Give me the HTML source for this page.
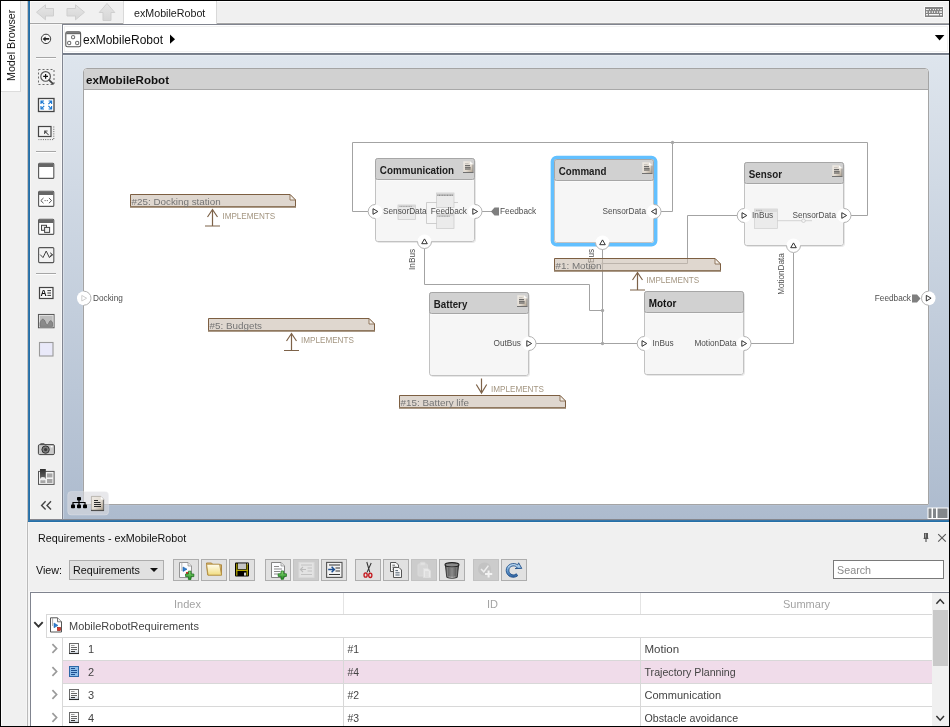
<!DOCTYPE html>
<html><head><meta charset="utf-8"><title>exMobileRobot</title>
<style>
*{box-sizing:border-box;margin:0;padding:0}
html,body{width:950px;height:727px;overflow:hidden;background:#f0f0f0;font-family:"Liberation Sans",sans-serif;}
#root{position:relative;width:950px;height:727px;overflow:hidden;background:#f0f0f0}
#root>*{will-change:transform}
.abs{position:absolute}
svg text{font-family:"Liberation Sans",sans-serif}
.bt{font-size:10.4px;font-weight:bold}
.pl{font-size:8.25px;fill:#4e4e4e}
.nt{font-size:9.85px;fill:#757575}
.im{font-size:8.15px;fill:#a39580}
.pb{fill:none;stroke:#b2b2b2;stroke-width:1}
.ui{font-size:10.7px;color:#1a1a1a;white-space:nowrap;line-height:1}
.btn{position:absolute;top:559px;width:26px;height:22px;background:#e1e1e1;border:1px solid #adadad}
.btn.dis{background:#cccccc;border-color:#c2c2c2}
.cell{position:absolute;font-size:11px;color:#444;white-space:nowrap;line-height:1}
.hl{position:absolute;height:1px;background:#d8d8d8}
.vl{position:absolute;width:1px;background:#d8d8d8}
</style></head><body><div id="root">

<!-- outer black borders -->
<div class="abs" style="left:0;top:0;width:950px;height:1px;background:#000"></div>
<div class="abs" style="left:0;top:0;width:1px;height:727px;background:#000"></div>
<div class="abs" style="left:949px;top:0;width:1px;height:727px;background:#000"></div>
<div class="abs" style="left:0;top:726px;width:950px;height:1px;background:#000"></div>
<div class="abs" style="left:1px;top:1px;width:1px;height:725px;background:#fafafa"></div>

<!-- Model Browser tab -->
<div class="abs" style="left:1px;top:1px;width:20px;height:91px;background:#fff;border-right:1px solid #dcdcdc;border-bottom:1px solid #dcdcdc"></div>
<div class="abs ui" style="left:0;top:0;width:0;height:0"><div style="position:absolute;left:5.6px;top:80.6px;transform-origin:0 0;transform:rotate(-90deg);font-size:10.7px;color:#111;">Model Browser</div></div>

<!-- blue frame lines -->
<div class="abs" style="left:26px;top:1px;width:1px;height:520px;background:#f4f4f4"></div>
<div class="abs" style="left:27px;top:1px;width:1px;height:521px;background:#c5c2c0"></div>
<div class="abs" style="left:28px;top:1px;width:1px;height:521px;background:#3677aa"></div>
<div class="abs" style="left:29px;top:1px;width:1px;height:521px;background:#256fa7"></div>
<div class="abs" style="left:30px;top:2px;width:1px;height:518px;background:#f9f6f3"></div>
<div class="abs" style="left:28px;top:520px;width:921px;height:1px;background:#3677aa"></div>
<div class="abs" style="left:28px;top:521px;width:921px;height:1px;background:#256fa7"></div>
<div class="abs" style="left:30px;top:522px;width:919px;height:1px;background:#f8f6f3"></div>
<div class="abs" style="left:30px;top:519px;width:919px;height:1px;background:#85868d"></div>
<div class="abs" style="left:26px;top:521px;width:1px;height:205px;background:#f5f5f5"></div>
<div class="abs" style="left:27px;top:521px;width:1px;height:205px;background:#bababa"></div>
<div class="abs" style="left:28px;top:522px;width:1px;height:204px;background:#f5f5f5"></div>
<div class="abs" style="left:29px;top:591px;width:1px;height:135px;background:#f8f8f8"></div>
<div class="abs" style="left:29px;top:591px;width:920px;height:1px;background:#f8f8f8"></div>

<!-- top tab strip -->
<div class="abs" style="left:30px;top:1px;width:919px;height:1px;background:#fdfdfd"></div>
<div class="abs" style="left:30px;top:22px;width:919px;height:1px;background:#f5f5f5"></div>
<div class="abs" style="left:30px;top:23px;width:919px;height:1px;background:#a6a6a6"></div>
<div class="abs" style="left:62px;top:24px;width:887px;height:1px;background:#80848f"></div>
<div class="abs" style="left:31px;top:24px;width:31px;height:1px;background:#f8f8f8"></div>
<div class="abs" style="left:123px;top:1px;width:94px;height:23px;background:#fff;border-left:1px solid #d9d9d9;border-right:1px solid #d9d9d9"></div>
<div class="abs ui" style="left:134px;top:8px;font-size:10.7px;">exMobileRobot</div>
<svg class="abs" style="left:30px;top:0px" width="100" height="24" viewBox="0 0 100 24">
<defs><linearGradient id="ag" x1="0" y1="0" x2="0" y2="1"><stop offset="0" stop-color="#e6e6e6"/><stop offset="1" stop-color="#d6d6d6"/></linearGradient></defs>
<path d="M6.5 12.2 L15.5 4.8 V8.5 H23.5 V16 H15.5 V19.8 Z" fill="url(#ag)" stroke="#cfcfcf" stroke-width="1" stroke-linejoin="round"/>
<path d="M54.5 12.2 L45.5 4.8 V8.5 H37 V16 H45.5 V19.8 Z" fill="url(#ag)" stroke="#cfcfcf" stroke-width="1" stroke-linejoin="round"/>
<path d="M77 3.5 L84.8 12.5 H81 V20.5 H73 V12.5 H69.2 Z" fill="url(#ag)" stroke="#cfcfcf" stroke-width="1" stroke-linejoin="round"/>
</svg><svg class="abs" style="left:924px;top:6px" width="20" height="12" viewBox="0 0 20 12"><rect x="0" y="0" width="20" height="12" rx="1" fill="#fafafa"/><rect x="1" y="1" width="18" height="10" fill="#848484"/><rect x="2" y="3" width="2.8" height="1.1" fill="#f4f4f4"/><rect x="6" y="3" width="1" height="1.1" fill="#f4f4f4"/><rect x="8.8" y="3" width="1.2" height="1.1" fill="#f4f4f4"/><rect x="11" y="3" width="1" height="1.1" fill="#f4f4f4"/><rect x="13.6" y="3" width="1.2" height="1.1" fill="#f4f4f4"/><rect x="16" y="3" width="2" height="1.1" fill="#f4f4f4"/><rect x="2" y="5.2" width="1.5" height="1.8" fill="#e6e6e6"/><rect x="5" y="5.2" width="1.3" height="1.8" fill="#e6e6e6"/><rect x="7.8" y="5.2" width="1.1" height="1.8" fill="#e6e6e6"/><rect x="10" y="5.2" width="1.2" height="1.8" fill="#e6e6e6"/><rect x="12.8" y="5.2" width="1.1" height="1.8" fill="#e6e6e6"/><rect x="15.2" y="5.2" width="2.8" height="1.8" fill="#e6e6e6"/><rect x="2" y="8" width="2" height="1.4" fill="#f4f4f4"/><rect x="5" y="8" width="10" height="1.4" fill="#f8f8f8"/><rect x="16" y="8" width="2" height="1.4" fill="#f4f4f4"/></svg>

<!-- address bar -->
<div class="abs" style="left:63px;top:25px;width:886px;height:28px;background:#fff"></div>
<div class="abs" style="left:64px;top:26px;width:884px;height:26px;border:1px solid #f1f1f1"></div>
<div class="abs" style="left:61px;top:24px;width:1px;height:495px;background:#f8f8f8"></div>
<div class="abs" style="left:62px;top:24px;width:1px;height:496px;background:#828691"></div>
<div class="abs" style="left:63px;top:53px;width:886px;height:1px;background:#757c89"></div>
<div class="abs" style="left:63px;top:54px;width:886px;height:1px;background:#7b828f"></div>
<div class="abs ui" style="left:83px;top:33.5px;font-size:12px;color:#111">exMobileRobot</div>
<svg class="abs" style="left:39px;top:32px" width="14" height="14" viewBox="0 0 14 14"><circle cx="7" cy="6.9" r="4.7" fill="#f6f6f6" stroke="#3c3c3c" stroke-width="1"/><path d="M3.6 6.9 L6.6 4.4 V6 H10.2 V7.8 H6.6 V9.4 Z" fill="#222"/></svg><svg class="abs" style="left:65px;top:31px" width="17" height="17" viewBox="0 0 17 17"><rect x="0.8" y="0.8" width="14.8" height="15" rx="1.6" fill="#fff" stroke="#555" stroke-width="1.1"/><rect x="1.2" y="1.2" width="14" height="2" fill="#6a6a6a"/><rect x="6.6" y="4.7" width="3" height="3" rx=".6" fill="none" stroke="#555" stroke-width=".9"/><rect x="2.7" y="10.4" width="3" height="3.2" rx=".6" fill="none" stroke="#555" stroke-width=".9"/><rect x="10.7" y="10.4" width="3" height="3.2" rx=".6" fill="none" stroke="#555" stroke-width=".9"/></svg><svg class="abs" style="left:169px;top:34px" width="8" height="11" viewBox="0 0 8 11"><path d="M1 0.6 L6 5.2 L1 9.8 Z" fill="#000"/></svg><svg class="abs" style="left:934px;top:34px" width="12" height="8" viewBox="0 0 12 8"><path d="M0.8 1 H10.4 L5.6 6.4 Z" fill="#000"/></svg>

<!-- canvas -->
<div class="abs" style="left:63px;top:55px;width:886px;height:464px;background:linear-gradient(#dee5ed,#adbbce)"></div>
<div class="abs" style="left:63px;top:55px;width:1px;height:464px;background:rgba(255,255,255,.3)"></div>
<div class="abs" style="left:63px;top:55px;width:886px;height:1px;background:rgba(255,255,255,.3)"></div>
<!-- frame -->
<div class="abs" style="left:83px;top:68px;width:846px;height:437px;background:#fff;border:1px solid #a4a4a4;border-radius:4px 4px 1px 1px;box-shadow:0 0 1px rgba(255,255,255,.7)"></div>
<div class="abs" style="left:84px;top:69px;width:844px;height:20px;background:#d1d1d1;border-radius:3px 3px 0 0"></div>
<div class="abs" style="left:84px;top:89px;width:844px;height:1px;background:#a8a8a8"></div>


<svg class="abs" style="left:0;top:0" width="950" height="727" viewBox="0 0 950 727">
<defs>
<linearGradient id="dg" x1="0" y1="0" x2="1" y2="1"><stop offset="0" stop-color="#efebe5"/><stop offset=".55" stop-color="#e2dbd2"/><stop offset="1" stop-color="#a89a86"/></linearGradient>
<g id="docic"><path d="M0.3 0.3 H7 L10.3 3.3 V11.6 H0.3 Z" fill="url(#dg)"/><path d="M7 0.3 L10.3 3.3 H7 Z" fill="#fbfaf8"/><path d="M10 3.6 V11.6" stroke="#8b8b8b" stroke-width=".9"/><path d="M0 11.5 H10.4" stroke="#707070" stroke-width="1"/><path d="M2 2.7 H5.6" stroke="#bdb8b2" stroke-width=".9"/><path d="M2 4.7 H7" stroke="#555" stroke-width="1.1"/><path d="M2 6.9 H7.6" stroke="#444" stroke-width="1.2"/><path d="M2 8.5 H7.6" stroke="#8a8680" stroke-width=".9"/></g>
</defs>
<text x="86" y="84" font-size="10.4" font-weight="bold" fill="#111" textLength="83" lengthAdjust="spacingAndGlyphs">exMobileRobot</text>
<path d="M368 211.5 H352.5 V142.5 H867.5 V215.5 H851" fill="none" stroke="#a3a3a3" stroke-width="1"/>
<path d="M661 211.5 H672.5 V142.5" fill="none" stroke="#a3a3a3" stroke-width="1"/>
<path d="M481 211.5 H492" fill="none" stroke="#a3a3a3" stroke-width="1"/>
<path d="M424.5 248 V284.5 H589.5 V310.5 H602.5" fill="none" stroke="#a3a3a3" stroke-width="1"/>
<path d="M602.5 249 V343.5" fill="none" stroke="#a3a3a3" stroke-width="1"/>
<path d="M536 343.5 H638" fill="none" stroke="#a3a3a3" stroke-width="1"/>
<path d="M751 343.5 H793.5 V253" fill="none" stroke="#a3a3a3" stroke-width="1"/>
<path d="M738 215.5 H687.5 V263.5 H602.5" fill="none" stroke="#a3a3a3" stroke-width="1"/>
<circle cx="672.5" cy="142.5" r="1.65" fill="#a6a6a6"/>
<circle cx="602.5" cy="310.5" r="1.65" fill="#a6a6a6"/>
<circle cx="602.5" cy="343.5" r="1.65" fill="#a6a6a6"/>
<circle cx="602.5" cy="263.5" r="1.1" fill="#aaa"/>
<text class="pl" transform="translate(415,270) rotate(-90)">InBus</text>
<text class="pl" transform="translate(594,270) rotate(-90)">InBus</text>
<text class="pl" transform="translate(784,294.8) rotate(-90)" textLength="41.6" lengthAdjust="spacingAndGlyphs">MotionData</text>
<rect x="376.5" y="159.5" width="99" height="83" rx="2.6" fill="none" stroke="#e7e7e7"/><rect x="375.5" y="158.5" width="99" height="83" rx="2.2" fill="#f6f6f6" stroke="#c2c2c2"/><line x1="376.5" y1="180.5" x2="473.5" y2="180.5" stroke="#fafafa"/><path d="M375.5 177.5 V160.7 a2.2 2.2 0 0 1 2.2 -2.2 H472.3 a2.2 2.2 0 0 1 2.2 2.2 V177.5 a2 2 0 0 1 -2 2 H377.5 a2 2 0 0 1 -2 -2 Z" fill="#d1d1d1" stroke="#a6a6a6"/><text x="379.8" y="174" class="bt" fill="#1c1c1c" textLength="74.3" lengthAdjust="spacingAndGlyphs">Communication</text><use href="#docic" x="463" y="161"/>
<g stroke="#c9c9c9" fill="#ebebeb" stroke-width="0.7"><rect x="398" y="205" width="17.5" height="14.5"/><rect x="436.5" y="193" width="17.5" height="14.5"/><rect x="436.5" y="214" width="17.5" height="14.5"/><path d="M436.5 202.5 H426.5 V223.5 H436.5 M454 202.5 H458" fill="none" stroke="#bdbdbd"/><rect x="398" y="205" width="17.5" height="2.2" fill="#d8d8d8" stroke="none"/><rect x="436.5" y="193" width="17.5" height="2.2" fill="#d8d8d8" stroke="none"/><rect x="436.5" y="214" width="17.5" height="2.2" fill="#d8d8d8" stroke="none"/><path d="M399.5 206.4 H412" stroke="#8a8a8a" stroke-width=".7" stroke-dasharray="1.1 .5" fill="none"/><path d="M437.3 195.2 H453.4" stroke="#4a4a4a" stroke-width=".8" stroke-dasharray="1.2 .4" fill="none"/><path d="M437.3 216.2 H450" stroke="#7a7a7a" stroke-width=".7" stroke-dasharray="1.2 .4" fill="none"/></g>
<rect x="552.4" y="157.4" width="103.3" height="87.3" rx="4.2" fill="none" stroke="#62c0ff" stroke-width="3.5"/><rect x="554.5" y="159.5" width="99" height="83" rx="2.2" fill="#f6f6f6" stroke="#c2c2c2"/><line x1="555.5" y1="181.5" x2="652.5" y2="181.5" stroke="#fafafa"/><path d="M554.5 178.5 V161.7 a2.2 2.2 0 0 1 2.2 -2.2 H651.3 a2.2 2.2 0 0 1 2.2 2.2 V178.5 a2 2 0 0 1 -2 2 H556.5 a2 2 0 0 1 -2 -2 Z" fill="#d1d1d1" stroke="#a6a6a6"/><text x="558.8" y="175" class="bt" fill="#1c1c1c" textLength="47.6" lengthAdjust="spacingAndGlyphs">Command</text><use href="#docic" x="642" y="162"/>
<rect x="745.5" y="163.5" width="99" height="83" rx="2.6" fill="none" stroke="#e7e7e7"/><rect x="744.5" y="162.5" width="99" height="83" rx="2.2" fill="#f6f6f6" stroke="#c2c2c2"/><line x1="745.5" y1="184.5" x2="842.5" y2="184.5" stroke="#fafafa"/><path d="M744.5 181.5 V164.7 a2.2 2.2 0 0 1 2.2 -2.2 H841.3 a2.2 2.2 0 0 1 2.2 2.2 V181.5 a2 2 0 0 1 -2 2 H746.5 a2 2 0 0 1 -2 -2 Z" fill="#d1d1d1" stroke="#a6a6a6"/><text x="748.8" y="178" class="bt" fill="#1c1c1c" textLength="33.3" lengthAdjust="spacingAndGlyphs">Sensor</text><use href="#docic" x="832" y="165"/>
<g stroke="#cfcfcf" fill="#ebebeb" stroke-width="0.7"><rect x="754.5" y="209" width="23" height="19.5"/><rect x="754.5" y="209" width="23" height="3" fill="#dcdcdc" stroke="none"/><path d="M777.5 220.7 H812" fill="none" stroke="#c4c4c4"/><circle cx="803.5" cy="220.7" r="1.8" fill="#f4f4f4" stroke="#c4c4c4"/><path d="M756 210.4 H762" stroke="#999" stroke-width=".7" stroke-dasharray="1.1 .5" fill="none"/></g>
<rect x="430.5" y="293.5" width="99" height="83" rx="2.6" fill="none" stroke="#e7e7e7"/><rect x="429.5" y="292.5" width="99" height="83" rx="2.2" fill="#f6f6f6" stroke="#c2c2c2"/><line x1="430.5" y1="314.5" x2="527.5" y2="314.5" stroke="#fafafa"/><path d="M429.5 311.5 V294.7 a2.2 2.2 0 0 1 2.2 -2.2 H526.3 a2.2 2.2 0 0 1 2.2 2.2 V311.5 a2 2 0 0 1 -2 2 H431.5 a2 2 0 0 1 -2 -2 Z" fill="#d1d1d1" stroke="#a6a6a6"/><text x="433.8" y="308" class="bt" fill="#1c1c1c" textLength="33.5" lengthAdjust="spacingAndGlyphs">Battery</text><use href="#docic" x="517" y="295"/>
<rect x="645.5" y="292.5" width="99" height="83" rx="2.6" fill="none" stroke="#e7e7e7"/><rect x="644.5" y="291.5" width="99" height="83" rx="2.2" fill="#f6f6f6" stroke="#c2c2c2"/><line x1="645.5" y1="313.5" x2="742.5" y2="313.5" stroke="#fafafa"/><path d="M644.5 310.5 V293.7 a2.2 2.2 0 0 1 2.2 -2.2 H741.3 a2.2 2.2 0 0 1 2.2 2.2 V310.5 a2 2 0 0 1 -2 2 H646.5 a2 2 0 0 1 -2 -2 Z" fill="#d1d1d1" stroke="#a6a6a6"/><text x="648.8" y="307" class="bt" fill="#111" textLength="27.5" lengthAdjust="spacingAndGlyphs">Motor</text>
<circle cx="375.2" cy="211.5" r="7" fill="#fff"/><path d="M375.2 204.5 A7 7 0 0 0 375.2 218.5" class="pb"/><path d="M373.0 208.7 L377.8 211.5 L373.0 214.3 Z" fill="none" stroke="#333" stroke-width="1"/>
<circle cx="475" cy="211.5" r="7" fill="#fff"/><path d="M475 204.5 A7 7 0 0 1 475 218.5" class="pb"/><path d="M472.8 208.7 L477.6 211.5 L472.8 214.3 Z" fill="none" stroke="#333" stroke-width="1"/>
<circle cx="424.5" cy="241.5" r="7" fill="#fff"/><path d="M417.5 241.5 A7 7 0 0 0 431.5 241.5" class="pb"/><path d="M421.7 243.7 L424.5 238.9 L427.3 243.7 Z" fill="none" stroke="#333" stroke-width="1"/>
<circle cx="654" cy="211.5" r="7" fill="#fff"/><path d="M654 204.5 A7 7 0 0 1 654 218.5" class="pb"/><path d="M656.2 208.7 L651.4 211.5 L656.2 214.3 Z" fill="none" stroke="#333" stroke-width="1"/>
<circle cx="602.5" cy="242.5" r="7" fill="#fff"/><path d="M595.5 242.5 A7 7 0 0 0 609.5 242.5" class="pb"/><path d="M599.7 244.7 L602.5 239.9 L605.3 244.7 Z" fill="none" stroke="#333" stroke-width="1"/>
<circle cx="744.2" cy="215.5" r="7" fill="#fff"/><path d="M744.2 208.5 A7 7 0 0 0 744.2 222.5" class="pb"/><path d="M742.0 212.7 L746.8000000000001 215.5 L742.0 218.3 Z" fill="none" stroke="#333" stroke-width="1"/>
<circle cx="844" cy="215.5" r="7" fill="#fff"/><path d="M844 208.5 A7 7 0 0 1 844 222.5" class="pb"/><path d="M841.8 212.7 L846.6 215.5 L841.8 218.3 Z" fill="none" stroke="#333" stroke-width="1"/>
<circle cx="793.5" cy="245.5" r="7" fill="#fff"/><path d="M786.5 245.5 A7 7 0 0 0 800.5 245.5" class="pb"/><path d="M790.7 247.7 L793.5 242.9 L796.3 247.7 Z" fill="none" stroke="#333" stroke-width="1"/>
<circle cx="529" cy="343.5" r="7" fill="#fff"/><path d="M529 336.5 A7 7 0 0 1 529 350.5" class="pb"/><path d="M526.8 340.7 L531.6 343.5 L526.8 346.3 Z" fill="none" stroke="#333" stroke-width="1"/>
<circle cx="644.2" cy="343.5" r="7" fill="#fff"/><path d="M644.2 336.5 A7 7 0 0 0 644.2 350.5" class="pb"/><path d="M642.0 340.7 L646.8000000000001 343.5 L642.0 346.3 Z" fill="none" stroke="#333" stroke-width="1"/>
<circle cx="744" cy="343.5" r="7" fill="#fff"/><path d="M744 336.5 A7 7 0 0 1 744 350.5" class="pb"/><path d="M741.8 340.7 L746.6 343.5 L741.8 346.3 Z" fill="none" stroke="#333" stroke-width="1"/>
<circle cx="84" cy="298.2" r="7" fill="#fff"/><path d="M84 291.2 A7 7 0 0 1 84 305.2" class="pb"/><path d="M81.8 295.4 L86.6 298.2 L81.8 301.0 Z" fill="none" stroke="#cfcfcf" stroke-width="1"/>
<circle cx="928.5" cy="298.2" r="7" fill="#fff"/><path d="M928.5 291.2 A7 7 0 0 0 928.5 305.2" class="pb"/><path d="M926.3 295.4 L931.1 298.2 L926.3 301.0 Z" fill="none" stroke="#333" stroke-width="1"/>
<text x="383" y="214.4" class="pl" text-anchor="start">SensorData</text>
<text x="467" y="214.4" class="pl" text-anchor="end">Feedback</text>
<text x="646" y="214.4" class="pl" text-anchor="end">SensorData</text>
<text x="752" y="218.4" class="pl" text-anchor="start">InBus</text>
<text x="836" y="218.4" class="pl" text-anchor="end">SensorData</text>
<text x="521" y="346.4" class="pl" text-anchor="end">OutBus</text>
<text x="652.5" y="346.4" class="pl" text-anchor="start">InBus</text>
<text x="736.6" y="346.4" class="pl" text-anchor="end">MotionData</text>
<text x="93" y="301.3" class="pl" text-anchor="start">Docking</text>
<text x="911" y="301.3" class="pl" text-anchor="end">Feedback</text>
<text x="500" y="214.4" class="pl" text-anchor="start">Feedback</text>
<path d="M499 207.5 V215.5 H494.5 L491 211.5 L494.5 207.5 Z" fill="#7f7f7f"/>
<path d="M912 294.5 V302.5 H917 L920.5 298.5 L917 294.5 Z" fill="#7f7f7f"/>
<path d="M130.5 194.5 H290.0 L295.5 200.0 V206.5 H130.5 Z" fill="rgba(203,190,178,0.62)" stroke="#7d5f42" stroke-width="1"/><path d="M290.0 194.5 V200.0 H295.5 Z" fill="#f3efea" stroke="#7d5f42" stroke-width="0.8" stroke-linejoin="round"/><line x1="130.0" y1="206.95" x2="296.0" y2="206.95" stroke="#8f785f" stroke-width="1.8"/><text x="131.5" y="204.5" class="nt">#25: Docking station</text>
<path d="M212.5 226 V209.5 M207.5 217.0 L212.5 209.5 L217.5 217.0 M205.0 226 H220.0" fill="none" stroke="#7d6248" stroke-width="1.2"/><text x="222.4" y="219" class="im">IMPLEMENTS</text>
<path d="M208.5 318.5 H369.0 L374.5 324.0 V330.5 H208.5 Z" fill="rgba(203,190,178,0.62)" stroke="#7d5f42" stroke-width="1"/><path d="M369.0 318.5 V324.0 H374.5 Z" fill="#f3efea" stroke="#7d5f42" stroke-width="0.8" stroke-linejoin="round"/><line x1="208.0" y1="330.95" x2="375.0" y2="330.95" stroke="#8f785f" stroke-width="1.8"/><text x="209.5" y="328.5" class="nt">#5: Budgets</text>
<path d="M291.5 350.5 V333.5 M286.5 341.0 L291.5 333.5 L296.5 341.0 M284.0 350.5 H299.0" fill="none" stroke="#7d6248" stroke-width="1.2"/><text x="301" y="343" class="im">IMPLEMENTS</text>
<path d="M554.5 258.5 H715.0 L720.5 264.0 V270.5 H554.5 Z" fill="rgba(203,190,178,0.62)" stroke="#7d5f42" stroke-width="1"/><path d="M715.0 258.5 V264.0 H720.5 Z" fill="#f3efea" stroke="#7d5f42" stroke-width="0.8" stroke-linejoin="round"/><line x1="554.0" y1="270.95" x2="721.0" y2="270.95" stroke="#8f785f" stroke-width="1.8"/><text x="555.5" y="268.5" class="nt">#1: Motion</text>
<path d="M637.5 290 V272.5 M632.5 280.0 L637.5 272.5 L642.5 280.0 M630.0 290 H645.0" fill="none" stroke="#7d6248" stroke-width="1.2"/><text x="646.4" y="283" class="im">IMPLEMENTS</text>
<path d="M481.5 378.5 V393 M476.3 384.5 L481.5 393 L486.7 384.5" fill="none" stroke="#7d6248" stroke-width="1.2"/><text x="491" y="392" class="im">IMPLEMENTS</text>
<path d="M399.5 395.5 H560.0 L565.5 401.0 V407.5 H399.5 Z" fill="rgba(203,190,178,0.62)" stroke="#7d5f42" stroke-width="1"/><path d="M560.0 395.5 V401.0 H565.5 Z" fill="#f3efea" stroke="#7d5f42" stroke-width="0.8" stroke-linejoin="round"/><line x1="399.0" y1="407.95" x2="566.0" y2="407.95" stroke="#8f785f" stroke-width="1.8"/><text x="400.5" y="405.5" class="nt">#15: Battery life</text>
<rect x="67.7" y="491.4" width="41" height="23.6" rx="3.6" fill="rgba(217,218,222,.61)" stroke="rgba(255,255,255,.22)" stroke-width="1"/><g fill="#000"><rect x="77" y="497" width="4" height="3.6" rx=".8"/><rect x="71" y="504.4" width="4" height="3.8" rx=".8"/><rect x="77" y="504.4" width="4" height="3.8" rx=".8"/><rect x="83" y="504.4" width="4" height="3.8" rx=".8"/><path d="M79 500 V505 M73 505 V502.5 H85 V505" fill="none" stroke="#000" stroke-width="1.2"/></g><path d="M91.4 496.4 H100.8 L103.8 499.4 V510.8 H91.4 Z" fill="url(#dg)" stroke="#9a958c" stroke-width=".6"/><path d="M100.8 496.4 L103.8 499.4 H100.8 Z" fill="#fdfdfc"/><path d="M103.4 499.8 V510.8" stroke="#6a6a6a" stroke-width="1"/><path d="M91 510.4 H104" stroke="#4a4a4a" stroke-width="1.1"/><path d="M94 500.5 H98 M94 502.5 H100.4 M94 504.5 H101 M94 506.5 H101" stroke="#2a2a2a" stroke-width="1"/><rect x="927.5" y="507.5" width="21" height="11.5" fill="#fff"/><rect x="928.5" y="508.5" width="3" height="9.5" fill="#83878b"/><rect x="933" y="508.5" width="3" height="9.5" fill="#83878b"/><rect x="937.5" y="508.5" width="10" height="9.5" fill="#83878b"/>
</svg>

<div class="abs" style="left:36px;top:57px;width:20px;height:1px;background:#a6a6a6"></div><div class="abs" style="left:36px;top:58px;width:20px;height:1px;background:#fdfdfd"></div><div class="abs" style="left:36px;top:151px;width:20px;height:1px;background:#a6a6a6"></div><div class="abs" style="left:36px;top:152px;width:20px;height:1px;background:#fdfdfd"></div><div class="abs" style="left:36px;top:273px;width:20px;height:1px;background:#a6a6a6"></div><div class="abs" style="left:36px;top:274px;width:20px;height:1px;background:#fdfdfd"></div><svg class="abs" style="left:37px;top:68px" width="19" height="19" viewBox="0 0 19 19"><rect x="1.5" y="1.5" width="15.5" height="15" fill="none" stroke="#6c6c6c" stroke-width="1" stroke-dasharray="2 2"/><circle cx="8.6" cy="8.4" r="4.8" fill="#f6f6f6" stroke="#555" stroke-width="1.15"/><path d="M6.2 8.4 H11 M8.6 6 V10.8" stroke="#111" stroke-width="1.2"/><path d="M12.2 12.1 L16 15.9" stroke="#444" stroke-width="1.7" stroke-linecap="round"/></svg><svg class="abs" style="left:37px;top:97px" width="19" height="16" viewBox="0 0 19 16"><rect x="1.5" y="1.5" width="15.5" height="13" fill="#fff" stroke="#444" stroke-width="1.3"/><g stroke="#1b78d2" stroke-width="1.15" fill="none"><path d="M4 7 V4 H7 M4.2 4.2 L7.2 7.2"/><path d="M11.6 4 H14.6 V7 M14.4 4.2 L11.4 7.2"/><path d="M4 9 V12 H7 M4.2 11.8 L7.2 8.8"/><path d="M11.6 12 H14.6 V9 M14.4 11.8 L11.4 8.8"/></g></svg><svg class="abs" style="left:37px;top:125px" width="19" height="17" viewBox="0 0 19 17"><rect x="1.5" y="1.5" width="12.5" height="10" fill="#f4f4f4" stroke="#444" stroke-width="1.2"/><path d="M16.8 1.5 V14.6 H1.5" fill="none" stroke="#666" stroke-width="1" stroke-dasharray="1 1.3"/><path d="M11.6 10 L7.8 6.2 M7.6 9 V6 H10.6" fill="none" stroke="#555" stroke-width="1.05"/></svg><svg class="abs" style="left:37px;top:162px" width="19" height="18" viewBox="0 0 19 18"><rect x="1.6" y="1.2" width="15.2" height="15.2" rx="1" fill="#fff" stroke="#555" stroke-width="1.1"/><rect x="2" y="1.6" width="14.4" height="3.4" fill="#666"/></svg><svg class="abs" style="left:37px;top:190px" width="19" height="18" viewBox="0 0 19 18"><rect x="1.6" y="1.2" width="15.2" height="15.2" rx="1" fill="#fff" stroke="#555" stroke-width="1.1"/><rect x="2" y="1.6" width="14.4" height="3.4" fill="#666"/><path d="M6.5 8 L3.8 10.6 L6.5 13.2 M11.9 8 L14.6 10.6 L11.9 13.2" fill="none" stroke="#555" stroke-width="1"/><path d="M7.6 10.6 H8.6 M9.8 10.6 H10.8" stroke="#555" stroke-width="1"/></svg><svg class="abs" style="left:37px;top:218px" width="19" height="18" viewBox="0 0 19 18"><rect x="1.6" y="1.2" width="15.2" height="15.2" rx="1" fill="#fff" stroke="#555" stroke-width="1.1"/><rect x="2" y="1.6" width="14.4" height="3.4" fill="#666"/><rect x="4.5" y="7.3" width="5" height="5" fill="#eee" stroke="#444" stroke-width="1"/><rect x="7.6" y="9.4" width="5" height="5" fill="#eee" stroke="#444" stroke-width="1"/></svg><svg class="abs" style="left:37px;top:246px" width="19" height="18" viewBox="0 0 19 18"><rect x="1.6" y="1.6" width="15.2" height="15" rx="1" fill="#f2f2f2" stroke="#555" stroke-width="1.1"/><path d="M3.2 8.6 L6 11.6 L9.2 5 L12.4 11.6 L14.4 8.8 H15.4" fill="none" stroke="#444" stroke-width="1"/><path d="M13.2 6.8 L15.6 8.8 L13.2 10.8" fill="none" stroke="#333" stroke-width="1"/></svg><svg class="abs" style="left:38px;top:286px" width="17" height="14" viewBox="0 0 17 14"><rect x="1.5" y="1.5" width="13.5" height="11" fill="#f8f8f8" stroke="#444" stroke-width="1.2"/><text x="2.6" y="10.4" font-size="8.5" font-weight="bold" font-family="Liberation Sans" fill="#111">A</text><path d="M9.4 4.6 H13 M9.4 7 H13 M9.4 9.4 H13" stroke="#333" stroke-width="1"/></svg><svg class="abs" style="left:37px;top:313px" width="19" height="16" viewBox="0 0 19 16"><rect x="1.5" y="1.5" width="15.5" height="13.2" fill="#bdbdbd" stroke="#555" stroke-width="1.1"/><rect x="2.4" y="2.4" width="13.7" height="11.4" fill="none" stroke="#e6e6e6" stroke-width=".9"/><path d="M3 13.4 V10 C4.5 5 7 5 8.5 9.5 C9.5 12.5 11 12.5 12 9.5 C13 7 14.5 7 15.6 10 V13.4 Z" fill="#8a8a8a" stroke="#6a6a6a" stroke-width=".7"/></svg><svg class="abs" style="left:38px;top:341px" width="17" height="17" viewBox="0 0 17 17"><rect x="1.5" y="1.5" width="13.5" height="13.5" fill="#e9e9f9" stroke="#9a9a9a" stroke-width="1.1"/></svg><svg class="abs" style="left:37px;top:442px" width="19" height="14" viewBox="0 0 19 14"><rect x="1.4" y="2.6" width="16" height="10" rx="1.3" fill="#c9c9c9" stroke="#444" stroke-width="1"/><rect x="3.4" y="1.2" width="4" height="1.6" fill="#555"/><circle cx="8.6" cy="7.6" r="3.7" fill="#7c7c7c" stroke="#333" stroke-width="1"/><circle cx="8.6" cy="7.6" r="1.6" fill="#3a3a3a"/><rect x="13.6" y="4" width="2" height="1.4" fill="#fff"/></svg><svg class="abs" style="left:37px;top:468px" width="19" height="18" viewBox="0 0 19 18"><rect x="1.5" y="3.4" width="15.6" height="13" fill="#f2f2f2" stroke="#555" stroke-width="1"/><rect x="10" y="5.4" width="5.4" height="4" fill="#a6a6a6"/><rect x="10" y="11" width="5.4" height="4" fill="#a6a6a6"/><rect x="3.4" y="12.2" width="5" height="2.8" fill="#a6a6a6"/><defs><linearGradient id="br" x1="0" y1="0" x2="0" y2="1"><stop offset="0" stop-color="#2e2e2e"/><stop offset="1" stop-color="#6a6a6a"/></linearGradient></defs><rect x="3" y="1" width="5.8" height="10" fill="url(#br)"/><ellipse cx="5.9" cy="10.6" rx="2.7" ry="1.7" fill="#ececec"/></svg><svg class="abs" style="left:40px;top:500px" width="13" height="11" viewBox="0 0 13 11"><path d="M5.6 1.2 L1.6 5.4 L5.6 9.6 M11 1.2 L7 5.4 L11 9.6" fill="none" stroke="#444" stroke-width="1.4"/></svg>

<!-- bottom panel -->
<div class="abs ui" style="left:38px;top:532.5px;font-size:10.75px;color:#111">Requirements - exMobileRobot</div>
<svg class="abs" style="left:921px;top:532px" width="9" height="11" viewBox="0 0 9 11"><path d="M3 .9 H7 V5.6 L7.5 7 H2.5 L3 5.6 Z" fill="#555"/><rect x="4" y="1.6" width="1.1" height="4" fill="#a0a0a0"/><path d="M5 7 V10" stroke="#666" stroke-width="1.3"/></svg><svg class="abs" style="left:937px;top:533px" width="10" height="10" viewBox="0 0 10 10"><path d="M1.2 1.1 L8.8 8.7 M8.8 1.1 L1.2 8.7" stroke="#5a5a5a" stroke-width="1.15"/></svg>
<div class="abs ui" style="left:36px;top:565px;font-size:10.75px;color:#111">View:</div>
<div class="abs" style="left:69px;top:560px;width:95px;height:20px;background:#e1e1e1;border:1px solid #adadad"></div>
<div class="abs ui" style="left:73px;top:565px;font-size:10.75px;color:#111">Requirements</div>
<div class="abs" style="left:150px;top:568px;width:0;height:0;border-left:4px solid transparent;border-right:4px solid transparent;border-top:4.5px solid #111"></div>
<div class="btn" style="left:173px"><svg style="position:absolute;left:-1px;top:-1px" width="26" height="22" viewBox="0 0 26 22"><defs><linearGradient id="gp" x1="0" y1="0" x2="0" y2="1"><stop offset="0" stop-color="#8fe07a"/><stop offset="1" stop-color="#1f8a1f"/></linearGradient></defs><path d="M6.5 3.5 H15 L18.5 7 V18.5 H6.5 Z" fill="#fbfcfe" stroke="#8b8b8b" stroke-width=".9"/><path d="M8.8 3.5 V12" stroke="#aaa" stroke-width=".8"/><path d="M15 3.5 V7 H18.5" fill="#e8e8e8" stroke="#8b8b8b" stroke-width=".7"/><path d="M10 8 L14 10.2 L10 12.4 Z" fill="#2f7fd0" stroke="#1b5ea8" stroke-width=".6"/><rect x="13" y="13" width="3" height="2.4" fill="#d33"/><path d="M15.399999999999999 12.2 h2.6 v2.8 h2.8 v2.6 h-2.8 v2.8 h-2.6 v-2.8 h-2.8 v-2.6 h2.8 z" fill="url(#gp)" stroke="#1c6e1c" stroke-width=".8"/></svg></div><div class="btn" style="left:201px"><svg style="position:absolute;left:-1px;top:-1px" width="26" height="22" viewBox="0 0 26 22"><defs><linearGradient id="gf" x1="0" y1="0" x2="0" y2="1"><stop offset="0" stop-color="#fffdf0"/><stop offset="1" stop-color="#f1dc7e"/></linearGradient></defs><path d="M5.5 4 H10.5 L12 5.8 H20.5 V15.8 H6.6 Z" fill="#e6c878" stroke="#a9803a" stroke-width=".9"/><path d="M5.6 5.2 H18.6 L20.6 16.2 H7 Z" fill="url(#gf)" stroke="#b08c40" stroke-width=".9"/></svg></div><div class="btn" style="left:229px"><svg style="position:absolute;left:-1px;top:-1px" width="26" height="22" viewBox="0 0 26 22"><rect x="6" y="3.6" width="14" height="14" rx="1" fill="#000"/><rect x="9" y="4.4" width="8" height="5.8" fill="#c4c4c4"/><rect x="7.2" y="4.6" width="1.2" height="12" fill="#b5a800"/><rect x="17.6" y="4.6" width="1.2" height="12" fill="#b5a800"/><rect x="7.2" y="10.8" width="11.6" height="1.2" fill="#b5a800"/><rect x="15" y="13.6" width="2" height="3" fill="#d8d8d8"/><rect x="18.2" y="4.4" width="1" height="1" fill="#ddd"/></svg></div><div class="btn" style="left:265px"><svg style="position:absolute;left:-1px;top:-1px" width="26" height="22" viewBox="0 0 26 22"><defs><linearGradient id="gp" x1="0" y1="0" x2="0" y2="1"><stop offset="0" stop-color="#8fe07a"/><stop offset="1" stop-color="#1f8a1f"/></linearGradient></defs><path d="M6.5 3.5 H16 L19.5 7 V18.5 H6.5 Z" fill="#fbfcfe" stroke="#777" stroke-width=".9"/><path d="M16 3.5 V7 H19.5" fill="#e4e4e4" stroke="#8b8b8b" stroke-width=".7"/><path d="M9 7.5 H14 M9 10 H17 M9 12.5 H15 M9 15 H13" stroke="#8a8a8a" stroke-width="1"/><path d="M16.0 12 h2.6 v2.8 h2.8 v2.6 h-2.8 v2.8 h-2.6 v-2.8 h-2.8 v-2.6 h2.8 z" fill="url(#gp)" stroke="#1c6e1c" stroke-width=".8"/></svg></div><div class="btn dis" style="left:293px"><svg style="position:absolute;left:-1px;top:-1px" width="26" height="22" viewBox="0 0 26 22"><rect x="6" y="3.4" width="15" height="15" fill="#e3e3e3" stroke="#dadada"/><path d="M8 6 H19 M14.5 9 H19 M14.5 12 H19 M8 15.5 H19" stroke="#c2c2c2" stroke-width="1"/><path d="M13 10.5 H7.6 M10 8 L7.4 10.5 L10 13" fill="none" stroke="#bcbcbc" stroke-width="1.1"/></svg></div><div class="btn" style="left:321px"><svg style="position:absolute;left:-1px;top:-1px" width="26" height="22" viewBox="0 0 26 22"><rect x="5.6" y="3.4" width="15.4" height="15" fill="#f2f2f2" stroke="#555" stroke-width="1.1"/><path d="M8 6 H19 M14.5 9 H19 M14.5 12 H19 M8 15.5 H19" stroke="#333" stroke-width="1.1"/><path d="M7.2 10.5 H13 M10.6 7.8 L13.4 10.5 L10.6 13.2" fill="none" stroke="#1d4f91" stroke-width="1.5"/></svg></div><div class="btn" style="left:355px"><svg style="position:absolute;left:-1px;top:-1px" width="26" height="22" viewBox="0 0 26 22"><path d="M11.8 3 L14.8 13.4 M16.2 4 L12 13.4" stroke="#333" stroke-width="1.05"/><ellipse cx="10.6" cy="16" rx="1.6" ry="2.2" fill="none" stroke="#c4161c" stroke-width="1.3"/><ellipse cx="15.3" cy="16.3" rx="1.6" ry="2.2" fill="none" stroke="#c4161c" stroke-width="1.3"/></svg></div><div class="btn" style="left:383px"><svg style="position:absolute;left:-1px;top:-1px" width="26" height="22" viewBox="0 0 26 22"><path d="M7.5 3.5 H13 L15.5 6 V12.5 H7.5 Z" fill="#f6f6f6" stroke="#555" stroke-width="1"/><path d="M9.4 6.2 H12 M9.4 8.2 H13.6 M9.4 10.2 H10.4" stroke="#555" stroke-width=".9"/><path d="M10.5 8.5 H16 L18.5 11 V18.5 H10.5 Z" fill="#f6f6f6" stroke="#555" stroke-width="1"/><path d="M12.4 11.6 H15 M12.4 13.8 H16.6 M12.4 16 H16.6" stroke="#4f5f70" stroke-width="1"/></svg></div><div class="btn dis" style="left:411px"><svg style="position:absolute;left:-1px;top:-1px" width="26" height="22" viewBox="0 0 26 22"><rect x="7" y="5" width="9.4" height="12" rx="1" fill="#d6d6d6" stroke="#dadada"/><rect x="9.2" y="3.2" width="5" height="3" rx=".8" fill="#e2e2e2" stroke="#d8d8d8" stroke-width=".7"/><path d="M12.5 9.5 H17 L19.5 12 V18.5 H12.5 Z" fill="#e9e9e9" stroke="#dedede"/><path d="M14 13 H17.8 M14 15 H17.8 M14 17 H17.8" stroke="#cfcfcf" stroke-width=".9"/></svg></div><div class="btn" style="left:439px"><svg style="position:absolute;left:-1px;top:-1px" width="26" height="22" viewBox="0 0 26 22"><defs><linearGradient id="gt" x1="0" y1="0" x2="1" y2="0"><stop offset="0" stop-color="#5c5c5c"/><stop offset=".5" stop-color="#d0d0d0"/><stop offset="1" stop-color="#505050"/></linearGradient></defs><path d="M6.4 6.6 H19.6 L18.2 18.4 C15 19.6 11 19.6 7.8 18.4 Z" fill="url(#gt)" stroke="#222" stroke-width=".8"/><ellipse cx="13" cy="5.8" rx="7" ry="2.2" fill="#8a8a8a" stroke="#222" stroke-width="1.1"/><path d="M10 8.6 V17.4 M12 8.8 V17.8 M14 8.8 V17.8 M16 8.6 V17.4" stroke="#3a3a3a" stroke-width=".9"/></svg></div><div class="btn dis" style="left:473px"><svg style="position:absolute;left:-1px;top:-1px" width="26" height="22" viewBox="0 0 26 22"><circle cx="11.6" cy="10" r="6.6" fill="#c3c3c3"/><path d="M8 10 L10.8 12.8 L15.4 6.6" fill="none" stroke="#ededed" stroke-width="1.5"/><path d="M16.6 11.4 v2.6 h2.6 v2 h-2.6 v2.6 h-2 v-2.6 h-2.6 v-2 h2.6 v-2.6 z" fill="#f2f2f2"/></svg></div><div class="btn" style="left:501px"><svg style="position:absolute;left:-1px;top:-1px" width="26" height="22" viewBox="0 0 26 22"><defs><linearGradient id="gr" x1="0" y1="0" x2="0" y2="1"><stop offset="0" stop-color="#d8ecfb"/><stop offset=".5" stop-color="#6fa4d6"/><stop offset="1" stop-color="#2a5f9e"/></linearGradient></defs><path d="M16.2 8.8 C14.5 6 9.6 6.2 8.2 9.6 C6.8 13.4 10 16.6 13.6 15.8 L15.4 14.8 L16.6 16.8 C12.6 20 5.4 17.8 5.2 11.6 C5 5.4 12.6 2.6 16.8 6 L17.6 3.8 L20.8 9.4 L14.2 9.6 Z" fill="url(#gr)" stroke="#1f4f8a" stroke-width=".9" stroke-linejoin="round"/></svg></div>
<div class="abs" style="left:833px;top:560px;width:111px;height:19px;background:#fff;border:1px solid #7a7a7a"></div>
<div class="abs ui" style="left:837px;top:564.5px;font-size:10.75px;color:#8a8a8a">Search</div>

<!-- table -->
<div class="abs" style="left:30px;top:592px;width:919px;height:134px;background:#fff"></div>
<div class="abs" style="left:30px;top:592px;width:919px;height:1px;background:#80848f"></div>
<div class="abs" style="left:30px;top:592px;width:1px;height:134px;background:#80848f"></div>
<div class="abs" style="left:932px;top:593px;width:17px;height:133px;background:#f0f0f0"></div><div class="abs" style="left:933px;top:610px;width:15px;height:56px;background:#c9c9c9"></div><svg class="abs" style="left:935px;top:597px" width="11" height="9" viewBox="0 0 11 9"><path d="M1.4 6.8 L5.2 2.6 L9 6.8" fill="none" stroke="#333" stroke-width="1.5"/></svg><svg class="abs" style="left:935px;top:714px" width="11" height="9" viewBox="0 0 11 9"><path d="M1.4 2 L5.2 6.2 L9 2" fill="none" stroke="#333" stroke-width="1.5"/></svg><div class="cell" style="left:174px;top:598.5px;color:#a3a3a3">Index</div><div class="cell" style="left:487px;top:598.5px;color:#a3a3a3">ID</div><div class="cell" style="left:783px;top:598.5px;color:#a3a3a3">Summary</div><div class="hl" style="left:46px;top:614px;width:886px"></div><div class="hl" style="left:46px;top:637px;width:886px"></div><div class="vl" style="left:46px;top:614px;height:24px"></div><div class="vl" style="left:343px;top:593px;height:21px;background:#e4e4e4"></div><div class="vl" style="left:640px;top:593px;height:21px;background:#e4e4e4"></div><div class="abs" style="left:63px;top:661px;width:869px;height:22px;background:#f0dcea"></div><div class="hl" style="left:62px;top:660px;width:870px"></div><div class="hl" style="left:62px;top:683px;width:870px"></div><div class="hl" style="left:62px;top:706px;width:870px"></div><div class="vl" style="left:62px;top:638px;height:88px"></div><div class="vl" style="left:343px;top:638px;height:88px"></div><div class="vl" style="left:640px;top:638px;height:88px"></div><svg class="abs" style="left:33px;top:620px" width="11" height="9" viewBox="0 0 11 9"><path d="M1.3 2.2 L5.5 6.6 L9.7 2.2" fill="none" stroke="#333" stroke-width="1.9"/></svg><svg class="abs" style="left:49px;top:617px" width="15" height="16" viewBox="0 0 15 16"><path d="M1.5 .8 H8.5 L12.5 4.8 V15 H1.5 Z" fill="#fff" stroke="#555" stroke-width="1"/><path d="M8.5 .8 V4.8 H12.5" fill="#eee" stroke="#555" stroke-width=".8"/><path d="M3.6 .8 V9" stroke="#999" stroke-width=".8"/><path d="M5 6 L9 8.4 L5 10.8 Z" fill="#2f7fd0" stroke="#1b5ea8" stroke-width=".5"/><rect x="8.4" y="10.4" width="3.2" height="3.2" fill="#e0392b" stroke="#8a1a10" stroke-width=".6"/></svg><div class="cell" style="left:69px;top:620.5px;font-size:10.98px">MobileRobotRequirements</div><svg class="abs" style="left:51px;top:643px" width="8" height="11" viewBox="0 0 8 11"><path d="M1.4 1.2 L5.6 5.5 L1.4 9.8" fill="none" stroke="#9a9a9a" stroke-width="1.7"/></svg><svg class="abs" style="left:68px;top:642px" width="12" height="13" viewBox="0 0 12 13"><defs><linearGradient id="ri" x1="0" y1="0" x2="0" y2="1"><stop offset=".6" stop-color="#fafafa"/><stop offset="1" stop-color="#c9d3dd"/></linearGradient></defs><rect x="1.5" y="1.5" width="9" height="10" fill="url(#ri)" stroke="#6a6a6a" stroke-width="1"/><path d="M3 3.5 H6.6" stroke="#9a9a9a" stroke-width="1"/><path d="M3 5.5 H9 M3 7.5 H9" stroke="#666" stroke-width="1"/><path d="M3 9.5 H7" stroke="#333" stroke-width="1"/><path d="M1 11.5 H11" stroke="#2a2a2a" stroke-width="1.1"/></svg><svg class="abs" style="left:51px;top:666px" width="8" height="11" viewBox="0 0 8 11"><path d="M1.4 1.2 L5.6 5.5 L1.4 9.8" fill="none" stroke="#9a9a9a" stroke-width="1.7"/></svg><svg class="abs" style="left:68px;top:665px" width="12" height="13" viewBox="0 0 12 13"><rect x="1.5" y="1.5" width="9" height="10" fill="#8cbcea" stroke="#2c68a8" stroke-width="1"/><path d="M3 3.5 H7 M3 5.5 H9 M3 7.5 H9 M3 9.5 H7" stroke="#1d4f91" stroke-width="1"/></svg><svg class="abs" style="left:51px;top:689px" width="8" height="11" viewBox="0 0 8 11"><path d="M1.4 1.2 L5.6 5.5 L1.4 9.8" fill="none" stroke="#9a9a9a" stroke-width="1.7"/></svg><svg class="abs" style="left:68px;top:688px" width="12" height="13" viewBox="0 0 12 13"><defs><linearGradient id="ri" x1="0" y1="0" x2="0" y2="1"><stop offset=".6" stop-color="#fafafa"/><stop offset="1" stop-color="#c9d3dd"/></linearGradient></defs><rect x="1.5" y="1.5" width="9" height="10" fill="url(#ri)" stroke="#6a6a6a" stroke-width="1"/><path d="M3 3.5 H6.6" stroke="#9a9a9a" stroke-width="1"/><path d="M3 5.5 H9 M3 7.5 H9" stroke="#666" stroke-width="1"/><path d="M3 9.5 H7" stroke="#333" stroke-width="1"/><path d="M1 11.5 H11" stroke="#2a2a2a" stroke-width="1.1"/></svg><svg class="abs" style="left:51px;top:712px" width="8" height="11" viewBox="0 0 8 11"><path d="M1.4 1.2 L5.6 5.5 L1.4 9.8" fill="none" stroke="#9a9a9a" stroke-width="1.7"/></svg><svg class="abs" style="left:68px;top:711px" width="12" height="13" viewBox="0 0 12 13"><defs><linearGradient id="ri" x1="0" y1="0" x2="0" y2="1"><stop offset=".6" stop-color="#fafafa"/><stop offset="1" stop-color="#c9d3dd"/></linearGradient></defs><rect x="1.5" y="1.5" width="9" height="10" fill="url(#ri)" stroke="#6a6a6a" stroke-width="1"/><path d="M3 3.5 H6.6" stroke="#9a9a9a" stroke-width="1"/><path d="M3 5.5 H9 M3 7.5 H9" stroke="#666" stroke-width="1"/><path d="M3 9.5 H7" stroke="#333" stroke-width="1"/><path d="M1 11.5 H11" stroke="#2a2a2a" stroke-width="1.1"/></svg><svg class="abs" style="left:0;top:0" width="950" height="727" viewBox="0 0 950 727"><text x="88" y="653.2" font-size="11" fill="#444">1</text><text x="347.4" y="653.2" font-size="11" fill="#444" textLength="11.6" lengthAdjust="spacingAndGlyphs">#1</text><text x="644.5" y="653.2" font-size="11" fill="#444" textLength="34.6" lengthAdjust="spacingAndGlyphs">Motion</text><text x="88" y="676.2" font-size="11" fill="#444">2</text><text x="347.4" y="676.2" font-size="11" fill="#444" textLength="11.6" lengthAdjust="spacingAndGlyphs">#4</text><text x="644.5" y="676.2" font-size="11" fill="#444" textLength="91.2" lengthAdjust="spacingAndGlyphs">Trajectory Planning</text><text x="88" y="699.2" font-size="11" fill="#444">3</text><text x="347.4" y="699.2" font-size="11" fill="#444" textLength="11.6" lengthAdjust="spacingAndGlyphs">#2</text><text x="644.5" y="699.2" font-size="11" fill="#444" textLength="76.6" lengthAdjust="spacingAndGlyphs">Communication</text><text x="88" y="722.2" font-size="11" fill="#444">4</text><text x="347.4" y="722.2" font-size="11" fill="#444" textLength="11.6" lengthAdjust="spacingAndGlyphs">#3</text><text x="644.5" y="722.2" font-size="11" fill="#444" textLength="93.6" lengthAdjust="spacingAndGlyphs">Obstacle avoidance</text></svg>
</div></body></html>
